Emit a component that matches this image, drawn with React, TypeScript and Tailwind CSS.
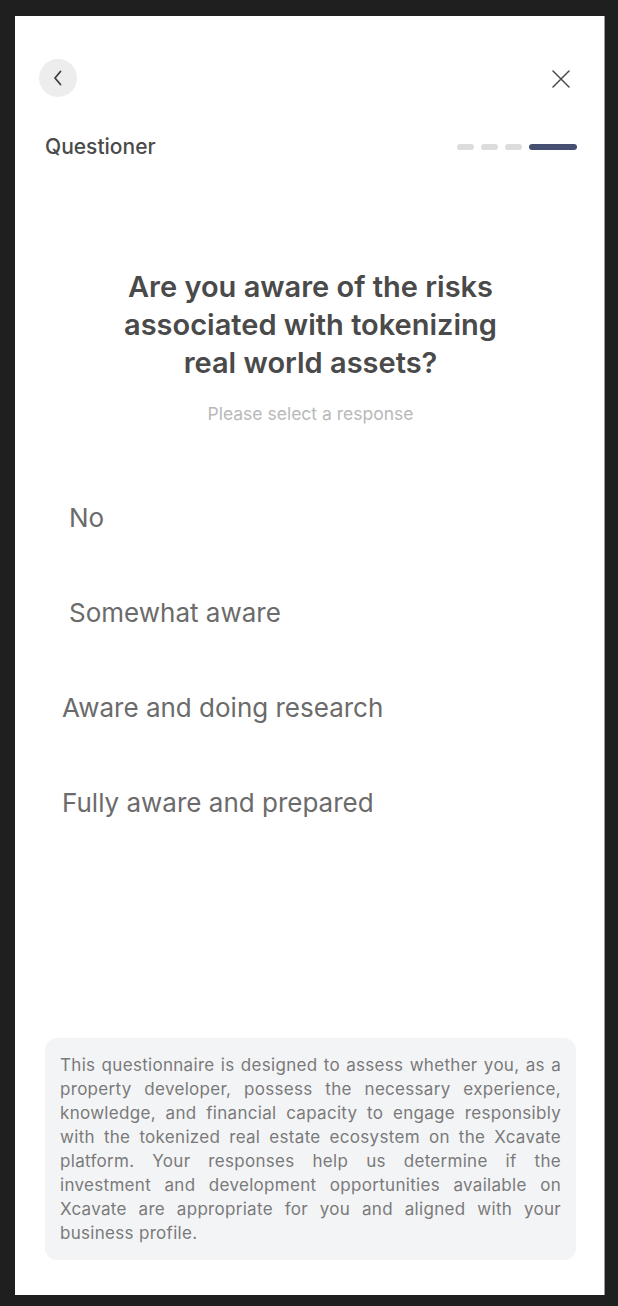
const options = [
  { label: "No", indent: "pl-[24px]" },
  { label: "Somewhat aware", indent: "pl-[24px]" },
  { label: "Aware and doing research", indent: "pl-[17px]" },
  { label: "Fully aware and prepared", indent: "pl-[17px]" },
];

export default function App() {
  return (
    <div className="w-[618px] h-[1306px] bg-[#1f1f1f] pt-[16px] pl-[15px] font-['Inter',sans-serif]">
      <div className="w-[590px] h-[1279px] bg-white border-r border-[#9a9a9a] flex flex-col pl-[30px] pr-[28px]">
        {/* top bar */}
        <div className="flex items-center justify-between pt-[43px]">
          <button className="w-[38px] h-[38px] -ml-[6px] rounded-full bg-[#ededed] flex items-center justify-center">
            <svg width="10" height="16" viewBox="0 0 10 16" fill="none" stroke="#3d3d3d" strokeWidth="1.8" strokeLinecap="round" strokeLinejoin="round">
              <path d="M7.5 1.5 L2 8 L7.5 14.5" />
            </svg>
          </button>
          <button className="mr-[6px] mt-[1px]">
            <svg width="18" height="18" viewBox="0 0 18 18" fill="none" stroke="#4a4a4a" strokeWidth="1.5" strokeLinecap="round">
              <path d="M1 1 L17 17 M17 1 L1 17" />
            </svg>
          </button>
        </div>

        <div className="flex items-center justify-between mt-[36px]">
          <h1 className="text-[21px] leading-[28px] font-medium text-[#4a4a4a]">Questioner</h1>
          <div className="flex items-center gap-[7px] mr-[-1px]">
            <span className="w-[17px] h-[6px] rounded-full bg-[#dcdcdc]" />
            <span className="w-[17px] h-[6px] rounded-full bg-[#dcdcdc]" />
            <span className="w-[17px] h-[6px] rounded-full bg-[#dcdcdc]" />
            <span className="w-[48px] h-[6px] rounded-full bg-[#454f72]" />
          </div>
        </div>

        {/* question */}
        <h2 className="mt-[107px] mx-auto w-[400px] text-center text-[29px] leading-[38px] font-semibold text-[#4a4a4a]">
          Are you aware of the risks associated with tokenizing real world assets?
        </h2>
        <p className="mt-[19px] text-center text-[17.5px] text-[#b9b9b9]">Please select a response</p>

        <div className="flex flex-col mt-[73px] gap-[60px]">
          {options.map((o) => (
            <button key={o.label} className={`text-left text-[26px] leading-[35px] text-[#6b6b6b] ${o.indent}`}>
              {o.label}
            </button>
          ))}
        </div>

        <div className="mt-auto mb-[35px] bg-[#f3f4f6] rounded-[12px] px-[15px] pt-[15px] pb-[15px]">
          <p className="text-[17px] tracking-[0.3px] leading-[24px] text-[#7a7a7a] text-justify">
            This questionnaire is designed to assess whether you, as a property developer, possess the necessary
            experience, knowledge, and financial capacity to engage responsibly with the tokenized real estate
            ecosystem on the Xcavate platform. Your responses help us determine if the investment and development
            opportunities available on Xcavate are appropriate for you and aligned with your business profile.
          </p>
        </div>
      </div>
    </div>
  );
}
